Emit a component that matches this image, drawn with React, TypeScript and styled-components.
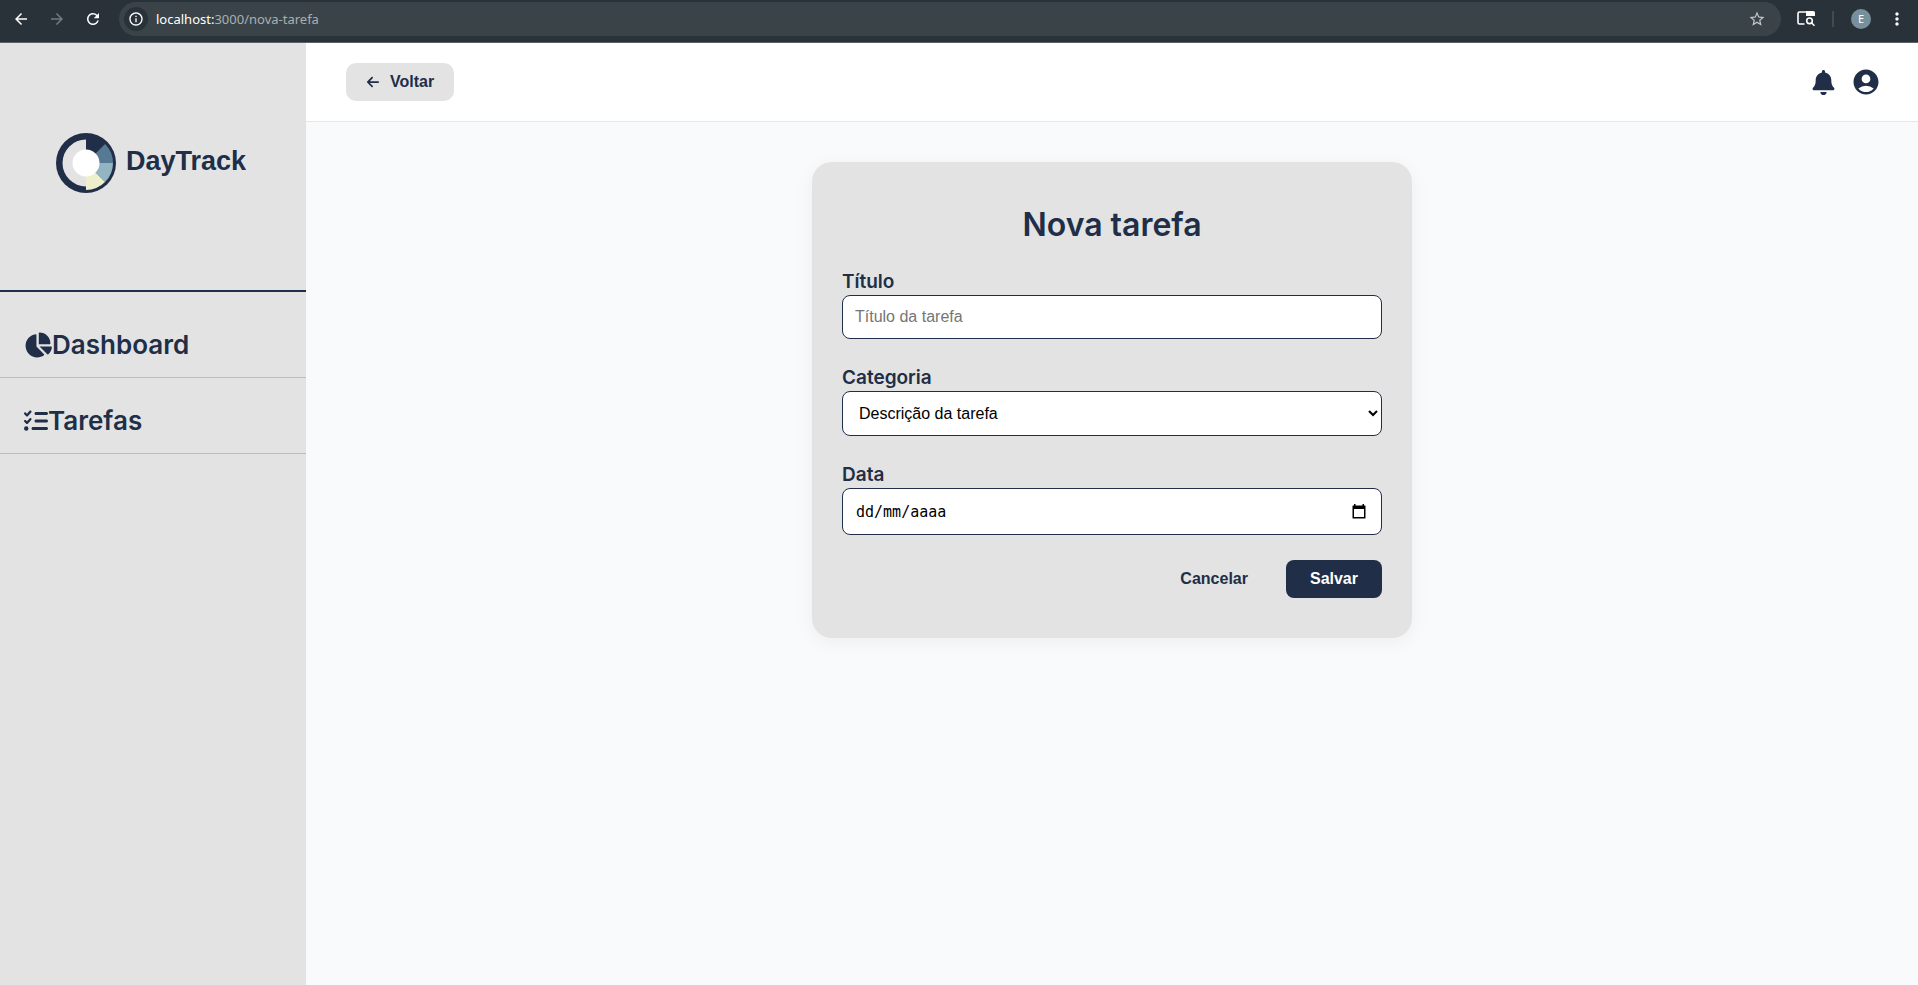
import React, { useState } from "react";
import styled, { createGlobalStyle } from "styled-components";
import { FaArrowLeft, FaChartPie, FaListCheck } from "react-icons/fa6";
import { FaBell } from "react-icons/fa";
import { MdAccountCircle, MdArrowBack, MdArrowForward, MdRefresh, MdInfoOutline, MdStarOutline, MdMoreVert } from "react-icons/md";

const navy = "#202e48";
const grey = "#e3e3e3";
const heading = `Inter, "Open Sans", sans-serif`;
const body = `"Liberation Sans", Arial, sans-serif`;

const GlobalStyle = createGlobalStyle`
  *, *::before, *::after { box-sizing: border-box; }
  body { margin: 0; font-family: ${body}; color: ${navy}; background: #f8fafc; }
  button, input, select { font: inherit; color: inherit; }
  button { border: 0; padding: 0; background: none; cursor: pointer; }
  h1, ul { margin: 0; padding: 0; }
  svg { display: block; flex: none; }
`;

const Window = styled.div`
  display: flex;
  flex-direction: column;
  min-height: 100vh;
`;

const BrowserBar = styled.div`
  display: flex;
  align-items: center;
  height: 43px;
  padding: 0 12px 5px;
  background: #283238;
  border-bottom: 1px solid #59646a;
  color: #fff;
`;

const NavButtons = styled.div`
  display: flex;
  gap: 18px;
  margin-right: 17px;
`;

const ToolButton = styled.button<{ $dim?: boolean }>`
  display: flex;
  align-items: center;
  justify-content: center;
  width: 18px;
  height: 18px;
  color: ${(p) => (p.$dim ? "#727b80" : "#fff")};
`;

const AddressBar = styled.div`
  display: flex;
  align-items: center;
  flex: 1;
  height: 34px;
  padding: 0 15px 0 5px;
  border-radius: 17px;
  background: #3a4448;
`;

const SiteInfo = styled.button`
  display: flex;
  align-items: center;
  justify-content: center;
  width: 24px;
  height: 24px;
  margin-right: 8px;
  border-radius: 50%;
  background: #283238;
`;

const Url = styled.span`
  flex: 1;
  font: 13px/18px "Noto Sans", sans-serif;
  color: #a9afb2;
`;

const Host = styled.span`
  color: #fff;
`;

const BarTools = styled.div`
  display: flex;
  align-items: center;
  gap: 17px;
  margin-left: 16px;
`;

const BarRule = styled.span`
  width: 2px;
  height: 16px;
  background: #3f4c54;
`;

const Avatar = styled.button`
  width: 20px;
  height: 20px;
  border-radius: 50%;
  background: #78909c;
  font: 11px/20px "Noto Sans", sans-serif;
`;

const Page = styled.div`
  display: flex;
  flex: 1;
`;

const Sidebar = styled.aside`
  width: 306px;
  flex: none;
  background: ${grey};
`;

const Brand = styled.div`
  display: flex;
  align-items: center;
  gap: 10px;
  height: 249px;
  padding: 0 56px 8px;
  border-bottom: 2px solid ${navy};
`;

const BrandName = styled.span`
  padding-bottom: 4px;
  font-size: 27px;
  line-height: 32px;
  font-weight: 700;
`;

const Menu = styled.ul`
  list-style: none;
  padding-top: 10px;
`;

const MenuItem = styled.li`
  border-bottom: 1px solid #bdbdbd;
`;

const MenuLink = styled.a`
  display: flex;
  align-items: center;
  height: 75px;
  padding: 10px 24px 0;
  color: ${navy};
  text-decoration: none;
  font: 600 26px/36px ${heading};
`;

const Main = styled.main`
  display: flex;
  flex-direction: column;
  flex: 1;
`;

const TopBar = styled.header`
  display: flex;
  align-items: center;
  justify-content: space-between;
  height: 79px;
  padding: 0 37px 0 40px;
  background: #fff;
  border-bottom: 1px solid #e5e7eb;
`;

const TopActions = styled.div`
  display: flex;
  align-items: center;
  gap: 15px;
`;

const Button = styled.button<{ $tone?: "solid" | "soft" }>`
  display: flex;
  align-items: center;
  gap: 10px;
  height: 38px;
  padding: 0 ${(p) => (p.$tone === "soft" ? 20 : 24)}px;
  border-radius: ${(p) => (p.$tone === "soft" ? 10 : 8)}px;
  background: ${(p) => (p.$tone === "solid" ? navy : p.$tone === "soft" ? grey : "transparent")};
  color: ${(p) => (p.$tone === "solid" ? "#fff" : navy)};
  font-size: 16px;
  font-weight: 700;
`;

const Card = styled.form`
  width: 100%;
  max-width: 600px;
  margin: 40px auto;
  padding: 40px 30px;
  border-radius: 20px;
  background: ${grey};
  box-shadow: 0 4px 20px rgba(0, 0, 0, 0.05);
`;

const Title = styled.h1`
  margin-bottom: 20px;
  text-align: center;
  font: 600 32px/46px ${heading};
`;

const Field = styled.div`
  display: flex;
  flex-direction: column;
  margin-bottom: 25px;
`;

const Label = styled.label`
  font: 600 19px/27px ${heading};
`;

const control = `
  width: 100%;
  height: 44px;
  padding: 0 12px;
  border: 1px solid ${navy};
  border-radius: 8px;
  background: #fff;
  font-size: 16px;
`;

const TextInput = styled.input`
  ${control}
  &::placeholder { color: #757575; }
`;

const Select = styled.select`
  ${control}
  color: #000;
  height: 45px;
`;

const DateBox = styled.div`
  ${control}
  display: flex;
  align-items: center;
  height: 47px;
  padding: 0 15px 0 13px;
  color: #000;
`;

const DateInput = styled.input`
  flex: 1;
  border: 0;
  padding: 0;
  outline: 0;
  background: none;
  font: 15px "DejaVu Sans Mono", monospace;
  &::placeholder { color: #000; opacity: 1; }
`;

const Actions = styled.div`
  display: flex;
  justify-content: flex-end;
  gap: 14px;
`;

function Logo() {
  return (
    <svg width="60" height="60" viewBox="0 0 60 60" aria-hidden="true">
      <circle cx="30" cy="30" r="30" fill={navy} />
      <path d="M30 6.500A23.500 23.500 0 0 0 30 53.500Z" fill={grey} />
      <path d="M30 30L49.100 10.900A27 27 0 0 1 57 30Z" fill="#577a94" />
      <path d="M30 30H57A27 27 0 0 1 49.100 49.100Z" fill="#93b4c2" />
      <path d="M30 30L49.100 49.100A27 27 0 0 1 30 57Z" fill="#eef0cb" />
      <circle cx="30" cy="30" r="13.500" fill="#fff" />
    </svg>
  );
}

function TabSearchIcon() {
  return (
    <svg width="18" height="16" viewBox="0 0 18 16" fill="none" stroke="#fff" strokeWidth="1.600" aria-hidden="true">
      <path d="M7.500 13H2.500Q1 13 1 11.500V2.500Q1 1 2.500 1H15.500Q17 1 17 2.500V5" />
      <path d="M9 0H16Q18 0 18 2V5H9Z" fill="#fff" stroke="none" />
      <circle cx="12.500" cy="9.800" r="2.800" />
      <path d="M14.500 11.800L17.500 14.800" />
    </svg>
  );
}

function CalendarIcon() {
  return (
    <svg width="14" height="15" viewBox="0 0 14 15" aria-hidden="true">
      <path d="M2 0H3.500V1.500H10.500V0H12V1.500H13Q13.500 1.500 13.500 2V14Q13.500 14.500 13 14.500H1Q.5 14.500 .5 14V2Q.5 1.500 1 1.500H2ZM2 5V13H12V5Z" fill="currentColor" fillRule="evenodd" />
    </svg>
  );
}

export default function App() {
  const [title, setTitle] = useState("");
  const [date, setDate] = useState("");
  return (
    <Window>
      <GlobalStyle />
      <BrowserBar>
        <NavButtons>
          <ToolButton aria-label="Voltar"><MdArrowBack size={18} /></ToolButton>
          <ToolButton aria-label="Avançar" $dim><MdArrowForward size={18} /></ToolButton>
          <ToolButton aria-label="Recarregar"><MdRefresh size={18} /></ToolButton>
        </NavButtons>
        <AddressBar>
          <SiteInfo aria-label="Informações do site"><MdInfoOutline size={16} /></SiteInfo>
          <Url><Host>localhost:</Host>3000/nova-tarefa</Url>
          <ToolButton aria-label="Favoritar"><MdStarOutline size={18} color="#c4c8ca" /></ToolButton>
        </AddressBar>
        <BarTools>
          <ToolButton aria-label="Pesquisar guias"><TabSearchIcon /></ToolButton>
          <BarRule />
          <Avatar aria-label="Perfil">E</Avatar>
          <ToolButton aria-label="Menu"><MdMoreVert size={20} /></ToolButton>
        </BarTools>
      </BrowserBar>
      <Page>
        <Sidebar>
          <Brand>
            <Logo />
            <BrandName>DayTrack</BrandName>
          </Brand>
          <nav>
            <Menu>
              <MenuItem><MenuLink href="#dashboard"><FaChartPie size={28} />Dashboard</MenuLink></MenuItem>
              <MenuItem><MenuLink href="#tarefas"><FaListCheck size={24} />Tarefas</MenuLink></MenuItem>
            </Menu>
          </nav>
        </Sidebar>
        <Main>
          <TopBar>
            <Button type="button" $tone="soft"><FaArrowLeft size={14} />Voltar</Button>
            <TopActions>
              <button aria-label="Notificações"><FaBell size={25} /></button>
              <button aria-label="Conta"><MdAccountCircle size={30} /></button>
            </TopActions>
          </TopBar>
          <Card onSubmit={(e) => e.preventDefault()}>
            <Title>Nova tarefa</Title>
            <Field>
              <Label htmlFor="titulo">Título</Label>
              <TextInput id="titulo" placeholder="Título da tarefa" value={title} onChange={(e) => setTitle(e.target.value)} />
            </Field>
            <Field>
              <Label htmlFor="categoria">Categoria</Label>
              <Select id="categoria"><option>Descrição da tarefa</option></Select>
            </Field>
            <Field>
              <Label htmlFor="data">Data</Label>
              <DateBox>
                <DateInput id="data" placeholder="dd/mm/aaaa" inputMode="numeric" value={date} onChange={(e) => setDate(e.target.value)} />
                <button type="button" aria-label="Abrir calendário"><CalendarIcon /></button>
              </DateBox>
            </Field>
            <Actions>
              <Button type="button">Cancelar</Button>
              <Button type="submit" $tone="solid">Salvar</Button>
            </Actions>
          </Card>
        </Main>
      </Page>
    </Window>
  );
}
